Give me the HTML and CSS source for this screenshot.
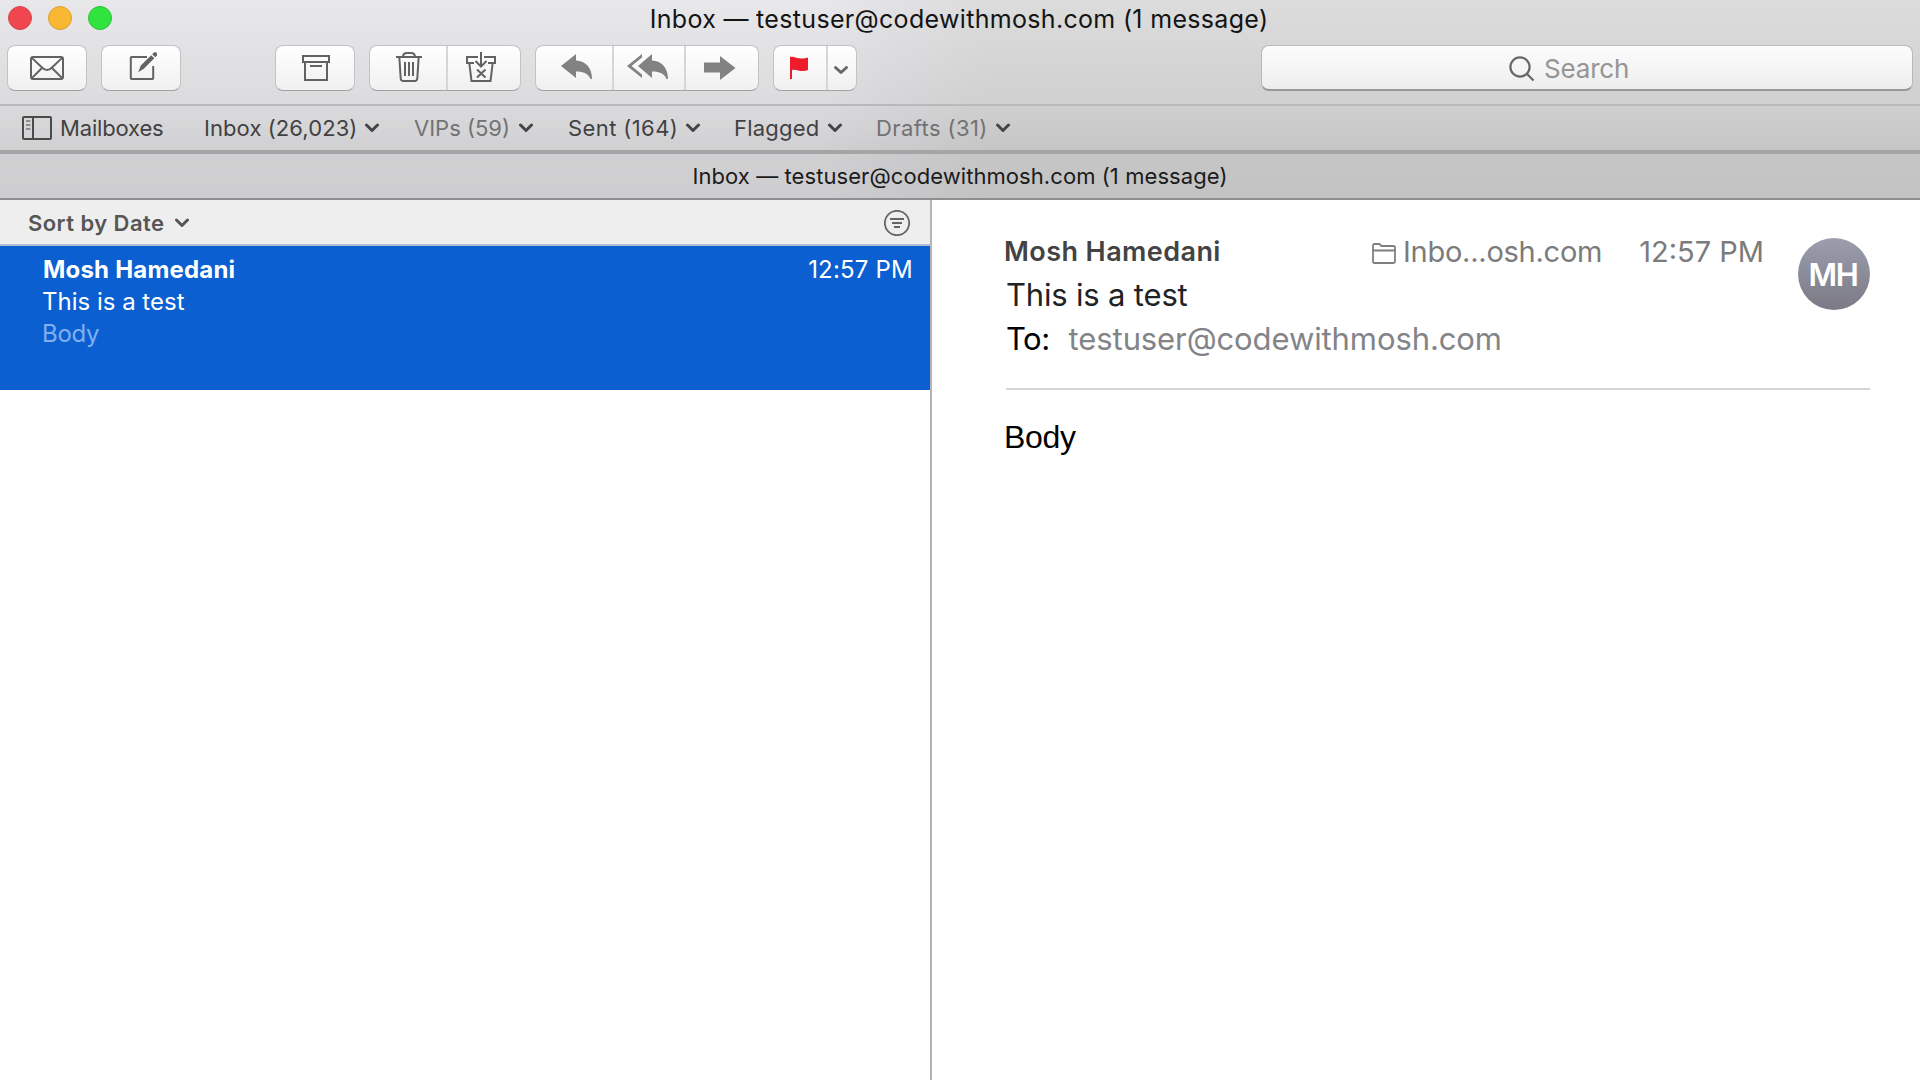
FILE: index.html
```
<!DOCTYPE html>
<html lang="en">
<head>
<meta charset="utf-8">
<title>Inbox — testuser@codewithmosh.com (1 message)</title>
<link rel="stylesheet" href="styles.css">
</head>
<body>
<div class="window">
  <header class="chrome">
    <div class="top">
      <div class="titlebar">
        <div class="lights"><i class="light red"></i><i class="light yellow"></i><i class="light green"></i></div>
        <h1 class="title">Inbox — testuser@codewithmosh.com (1 message)</h1>
      </div>
      <div class="toolbar">
        <div class="group">
          <button class="seg w78" aria-label="Get mail"><svg viewBox="8 45 78 46" class="line"><rect x="31" y="57" width="32" height="22" rx="2"/><path d="M31.6 57.6 42 67.5q5 5.2 10 0L62.4 57.6M31.6 78.400 41.500 68.500M62.400 78.400 52.500 68.500"/></svg></button>
        </div>
        <div class="group">
          <button class="seg w78" aria-label="New message"><svg viewBox="102 45 78 46" class="line"><path d="M147 57H131.500a.7.7 0 0 0-.7.7V78.300a.7.7 0 0 0 .7.7H152.500a.7.7 0 0 0 .7-.7V66"/><path class="solid" d="M138.200 72.200 140.800 65.600 151.200 55.200 154.300 58.300 143.800 68.800ZM152.200 54.200 153.900 52.500q1.200-1 2.500.2t.6 2.900L155.300 57.300Z"/></svg></button>
        </div>
        <div class="group archive">
          <button class="seg w78" aria-label="Archive"><svg viewBox="276 45 78 46" class="line"><path d="M303 56H329V62H303ZM305 62V80H327V62M310 66H322"/></svg></button>
        </div>
        <div class="group">
          <button class="seg w76" aria-label="Delete"><svg viewBox="370 45 76 46" class="line"><path d="M396 57H422M403 57q0-4 4-4h4q4 0 4 4M399.300 57 400.700 78.500q.2 2.500 2.600 2.500H414.700q2.400 0 2.600-2.500L418.700 57M405 62V76M409 62V76M413 62V76"/></svg></button>
          <button class="seg w74" aria-label="Junk"><svg viewBox="448 45 72 46" class="line"><path d="M478 57H467V63H474M484 57H495V63H488M469.300 63 471.500 81H490.500L492.700 63M481 52V66M475.500 61 481 66.500 486.500 61M477 69.500 485.500 77.500M485.500 69.500 477 77.500"/></svg></button>
        </div>
        <div class="group">
          <button class="seg w76" aria-label="Reply"><svg viewBox="536 45 76 46" class="fill"><path d="M561 66 576 54V60.500C586 61 592 68 592 79H590.500C588 73.500 584 71.500 576 71.500V78Z"/></svg></button>
          <button class="seg w72" aria-label="Reply all"><svg viewBox="614 45 70 46" class="fill"><path d="M638 66 652 54V60.500C662 61 668 68 668 79H666.500C664 73.500 660 71.500 652 71.500V78ZM627 66 642 54V57.500L631.500 66 642 74.500V78Z"/></svg></button>
          <button class="seg w74" aria-label="Forward"><svg viewBox="686 45 72 46" class="fill"><path d="M704 62.500H720V56L735.500 68 720 80V72.500H704Z"/></svg></button>
        </div>
        <div class="group">
          <button class="seg w52" aria-label="Flag"><svg viewBox="774 45 52 46" class="flag"><path d="M790 57C795 55.500 798 60.500 808 57.500V70C800 73 797 68.500 792 70V79H790Z"/></svg></button>
          <button class="seg w30" aria-label="Flag options"><svg viewBox="828 45 28 46" class="chev"><path d="M835.500 67.500 841 72.500 846.500 67.500"/></svg></button>
        </div>
        <label class="search"><svg class="glass" viewBox="0 0 26 28"><circle cx="11" cy="12" r="9.600"/><path d="M17.800 18.800 24.500 25.500"/></svg><span>Search</span></label>
      </div>
    </div>
    <nav class="favorites">
      <a class="fav mailboxes"><svg width="30" height="24" viewBox="0 0 30 24"><rect x="1" y="1" width="28" height="22" rx="1"/><path d="M11 1V23"/><path class="thin" d="M4 5H8.500M4 9H8.500M4 13H8.500"/></svg><span>Mailboxes</span></a>
      <a class="fav inbox"><span>Inbox (26,023)</span><svg class="chev" width="14" height="10" viewBox="0 0 14 10"><path d="M1.500 2 7 7.500 12.500 2"/></svg></a>
      <a class="fav dim"><span>VIPs (59)</span><svg class="chev" width="14" height="10" viewBox="0 0 14 10"><path d="M1.500 2 7 7.500 12.500 2"/></svg></a>
      <a class="fav wide"><span>Sent (164)</span><svg class="chev" width="14" height="10" viewBox="0 0 14 10"><path d="M1.500 2 7 7.500 12.500 2"/></svg></a>
      <a class="fav flagged"><span>Flagged</span><svg class="chev" width="14" height="10" viewBox="0 0 14 10"><path d="M1.500 2 7 7.500 12.500 2"/></svg></a>
      <a class="fav dim wide"><span>Drafts (31)</span><svg class="chev" width="14" height="10" viewBox="0 0 14 10"><path d="M1.500 2 7 7.500 12.500 2"/></svg></a>
    </nav>
    <div class="tab">Inbox — testuser@codewithmosh.com (1 message)</div>
  </header>
  <main class="panes">
    <section class="list">
      <div class="sort">
        <span class="sort-label">Sort by Date</span>
        <svg class="chev" width="14" height="10" viewBox="0 0 14 10"><path d="M1.500 2 7 7.500 12.500 2"/></svg>
        <svg class="filter" width="26" height="26" viewBox="0 0 26 26"><circle cx="13" cy="13" r="12.200"/><path d="M6 9H20M8 13H18M10 17H16"/></svg>
      </div>
      <article class="item">
        <div class="item-top"><strong>Mosh Hamedani</strong><time>12:57 PM</time></div>
        <div class="item-subject">This is a test</div>
        <div class="item-preview">Body</div>
      </article>
    </section>
    <section class="message">
      <div class="head">
        <div class="details">
          <div class="from">
            <strong>Mosh Hamedani</strong>
            <span class="folder"><svg width="24" height="21" viewBox="0 0 24 21"><path d="M1 18.500V2.500Q1 1 2.500 1H7.500L9.500 3H21.500Q23 3 23 4.500V18.500Q23 20 21.500 20H2.500Q1 20 1 18.500ZM1 7.500H23"/></svg><span>Inbo...osh.com</span></span>
            <time>12:57 PM</time>
          </div>
          <div class="subject">This is a test</div>
          <div class="to"><span class="to-label">To:</span><span class="address">testuser@codewithmosh.com</span></div>
        </div>
        <div class="avatar">MH</div>
      </div>
      <div class="body">Body</div>
    </section>
  </main>
</div>
</body>
</html>
```
FILE: styles.css
```
* { box-sizing: border-box; }
body { margin: 0; font-family: Inter, "Liberation Sans", sans-serif; background: #fff; color: #1b1b1b; }
svg { display: block; flex: none; fill: none; }
.window { width: 1920px; height: 1080px; display: flex; flex-direction: column; overflow: hidden; }

.chrome { background: linear-gradient(90deg, #e8e8ea 820px, #e2e1e4 890px, #dcdcdc 990px); }
.top { height: 106px; border-bottom: 2px solid #b9b8ba; background: linear-gradient(rgba(0,0,0,0), rgba(0,0,0,.055)); }
.titlebar { height: 45px; display: grid; grid-template-columns: 200px 1fr 202px; }
.lights { display: flex; gap: 16px; padding: 6px 0 0 8px; }
.light { width: 24px; height: 24px; border-radius: 50%; border: 1px solid; }
.red { background: #f0464f; border-color: #d64550; }
.yellow { background: #f8b831; border-color: #d99e33; }
.green { background: #30e33f; border-color: #30bf3b; }
.title { margin: 0; font-weight: 400; font-size: 25px; line-height: 38px; letter-spacing: .32px; text-align: center; color: #141414; white-space: nowrap; }

.toolbar { display: flex; padding: 0 7px; gap: 14px; }
.group { display: flex; height: 46px; border: 1px solid #c3c2c4; border-bottom-color: #a2a1a3; border-radius: 8px; background: linear-gradient(#fff, #f0f0f0); overflow: hidden; }
.group.archive { margin-left: 80px; }
.seg { appearance: none; border: 0; padding: 0; background: none; height: 44px; display: flex; align-items: center; justify-content: center; }
.seg + .seg { border-left: 2px solid #d6d5d7; }
.seg svg { height: 46px; width: 100%; }
.w78 { width: 78px; }
.w76 { width: 76px; }
.w74 { width: 74px; }
.w72 { width: 72px; }
.w52 { width: 52px; }
.w30 { width: 30px; }
.line { stroke: #626262; stroke-width: 2; }
.line .solid { fill: #626262; stroke: none; }
.seg svg.fill { fill: #828282; }
.seg svg.flag { fill: #ee1c2a; }
.chev { stroke: #454546; stroke-width: 3; stroke-linecap: round; stroke-linejoin: round; }
.seg .chev { stroke: #666; }
.search { margin-left: auto; width: 652px; height: 46px; border: 1px solid #b9b9b9; border-bottom: 2px solid #979797; border-radius: 8px; background: linear-gradient(#fcfcfc, #eee); display: flex; align-items: center; padding: 2px 0 0 247px; gap: 9px; font-size: 26px; letter-spacing: -.18px; color: #959595; }
.glass { width: 26px; height: 28px; stroke: #666; stroke-width: 2.2; }

.favorites { height: 48px; border-bottom: 4px solid #a5a5a6; background: linear-gradient(rgba(0,0,0,.06), rgba(0,0,0,.1)); display: grid; grid-template-columns: 182px 210px 154px 166px 142px 160px; padding-left: 22px; font-size: 22px; line-height: 44px; color: #414143; }
.fav { display: flex; align-items: center; gap: 9px; white-space: nowrap; }
.fav.dim { color: #727274; }
.fav.inbox { letter-spacing: .08px; }
.fav.flagged { letter-spacing: .2px; }
.fav.wide { letter-spacing: .4px; }
.fav.wide, .fav.inbox { gap: 8px; }
.fav.mailboxes { letter-spacing: -.17px; gap: 8px; }
.mailboxes svg { stroke: #4b4b4c; stroke-width: 2; }
.mailboxes .thin { stroke-width: 1.6; stroke: #777; }
.tab { height: 46px; border-bottom: 2px solid #8f8f91; background: linear-gradient(rgba(0,0,0,.1), rgba(0,0,0,.115)); font-size: 22px; letter-spacing: .07px; line-height: 44px; text-align: center; }

.panes { flex: 1; display: flex; }
.list { width: 932px; border-right: 2px solid #b4b4b6; }
.sort { height: 46px; border-bottom: 2px solid #b4bed3; background: #eee; display: flex; align-items: center; padding: 2px 20px 0 28px; gap: 11px; color: #565656; }
.sort-label { font-size: 22px; font-weight: 600; letter-spacing: .45px; }
.sort .chev { stroke: #565656; }
.filter { margin-left: auto; stroke: #646464; stroke-width: 1.8; }
.item { height: 144px; background: #0b5fd0; color: #fff; padding: 8px 17px 0 42px; font-size: 24px; line-height: 32px; }
.item-top { display: flex; justify-content: space-between; }
.item-top strong { font-weight: 700; letter-spacing: .2px; padding-left: 1px; }
.item-top time { letter-spacing: .2px; }
.item-preview { color: #80aff0; letter-spacing: -.3px; }

.message { flex: 1; padding: 0 50px 0 72px; }
.head { height: 190px; margin-left: 2px; border-bottom: 2px solid #d5d4d8; display: flex; justify-content: space-between; padding-top: 30px; }
.details { width: 758px; line-height: 44px; font-size: 31px; }
.from { display: flex; align-items: center; height: 43px; font-size: 29px; color: #7b7b7b; }
.from strong { flex: 1; font-size: 27px; font-weight: 600; letter-spacing: .42px; color: #434343; margin-left: -2px; }
.folder { display: flex; align-items: center; gap: 7px; margin-right: 37px; letter-spacing: -.25px; }
.folder svg { stroke: #7f7f7f; stroke-width: 1.8; margin-top: 4px; }
.subject { letter-spacing: -.18px; color: #202224; }
.to { display: flex; gap: 19px; color: #000; }
.to-label { letter-spacing: -.5px; }
.address { letter-spacing: -.1px; color: #838488; }
.avatar { width: 72px; height: 72px; margin-top: 8px; border-radius: 50%; background: linear-gradient(#9b9eae, #7b7a85); color: #fff; font-size: 31px; font-weight: 600; line-height: 73px; text-align: center; letter-spacing: -1.4px; padding-right: 2px; }
.body { font-family: "Liberation Sans", Arial, sans-serif; font-size: 32px; line-height: 44px; letter-spacing: -.3px; color: #000; padding-top: 25px; }
```
